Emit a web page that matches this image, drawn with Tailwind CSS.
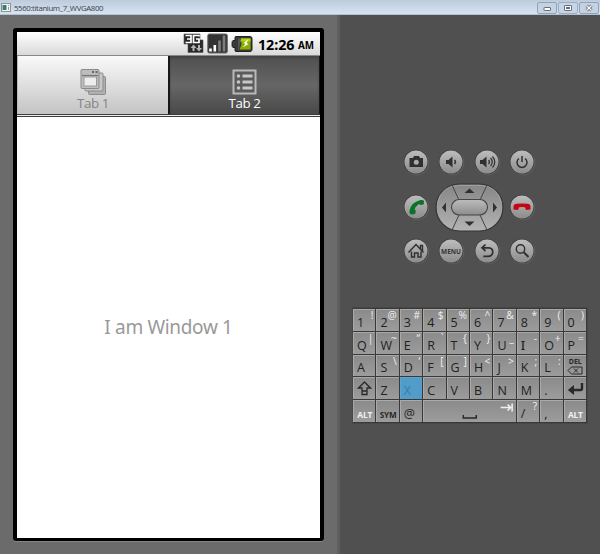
<!DOCTYPE html>
<html lang="en">
<head>
<meta charset="utf-8">
<title>5560:titanium_7_WVGA800</title>
<script src="https://cdn.jsdelivr.net/npm/@tailwindcss/browser@4"></script>
</head>
<body class="w-[600px] h-[554px] overflow-hidden flex flex-col bg-[#505050] font-['Noto_Sans','Open_Sans',sans-serif]">
<svg width="0" height="0" class="absolute"><defs>
<linearGradient id="metal" x1="0" y1="0" x2="0" y2="1"><stop offset="0" stop-color="#858585"/><stop offset="1" stop-color="#b4b4b4"/></linearGradient>
<linearGradient id="shine" x1="0" y1="0" x2="0" y2="1"><stop offset="0" stop-color="#bdbdbd"/><stop offset="1" stop-color="#8c8c8c"/></linearGradient>
</defs></svg>

<header class="h-[15px] shrink-0 flex items-center bg-linear-to-b from-[#bdcbdc] to-[#d5e3f2] border-b border-[#b4c2d0] pl-[1px]">
  <svg width="10" height="9" viewBox="0 0 10 9"><rect x=".5" y=".5" width="9" height="8" fill="#f5f5f5" stroke="#8b9494"/><rect x="1.5" y="2" width="4" height="5" fill="#3b7d70"/><path d="M7.5 2v1M7.5 4v3" stroke="#999"/></svg>
  <h1 class="ml-[3px] mt-[1px] text-[7.8px] leading-[14px] text-[#3c4248] tracking-[-0.37px] font-['Open_Sans',sans-serif] whitespace-nowrap">5560:titanium_7_WVGA800</h1>
  <div class="ml-auto mr-[1px] mt-[1px] flex gap-[1px]">
    <svg width="20" height="12" viewBox="0 0 20 12"><rect x=".5" y=".5" width="19" height="11" rx="1.5" fill="#c4d2e2" stroke="#91a3bb"/><rect x="7" y="5.5" width="6.500" height="3" rx=".5" fill="#fff" stroke="#666d78"/></svg>
    <svg width="20" height="12" viewBox="0 0 20 12"><rect x=".5" y=".5" width="19" height="11" rx="1.500" fill="#c7d6e6" stroke="#9badc2"/><rect x="6.500" y="3.500" width="7" height="5" rx=".5" fill="#fff" stroke="#666d78"/><rect x="8.500" y="5.500" width="3" height="1" fill="none" stroke="#666d78"/></svg>
    <svg width="20" height="12" viewBox="0 0 20 12"><rect x=".5" y=".5" width="19" height="11" rx="1.5" fill="#c4d2e2" stroke="#91a3bb"/><path d="M7.500 3.500L12.500 8.500M12.500 3.500L7.500 8.500" stroke="#626975" stroke-width="3"/><path d="M7.500 3.500L12.500 8.500M12.500 3.500L7.500 8.500" stroke="#fff" stroke-width="1.200"/></svg>
  </div>
</header>

<div class="flex flex-1 min-h-0">
  <section class="w-[340px] shrink-0 bg-[#6b6b6b] border-r-3 border-[#5e5e5e] pt-[13px] pl-[13px]">
    <main class="w-[311px] h-[513px] rounded-[3px] bg-white border-4 border-black border-b-3 flex flex-col shadow-[0_1px_0_#858585]">
      <div class="h-[24px] shrink-0 bg-linear-to-b from-white via-[#ececec] to-[#d9d9d9] border-b border-[#888] flex items-center pr-[6px] justify-end">
        <svg width="21" height="21" viewBox="0 0 21 21"><path d="M1 1h16v6h3v12.500H5V11H1z" fill="#292929" stroke="#555" stroke-width=".6"/><path d="M2.500 2.500h5.500v7h-5.500M4 6h4M16 3.500V2.500h-5.500v7H16V6h-3" fill="none" stroke="#fff" stroke-width="1.700"/><path d="M9.500 18v-3H7.500l3-3.500 3 3.500h-2v3zM15 12h2v3h2l-3 3.500-3-3.500h2z" fill="#b5b5b5"/></svg>
        <svg class="ml-[3px]" width="21" height="21" viewBox="0 0 21 21"><rect x=".8" y="1" width="19.500" height="19" rx="1.500" fill="#333" stroke="#666"/><path d="M3.500 18.500v-3M7.800 18.500v-6.500" stroke="#fff" stroke-width="2.600"/><path d="M12.500 18.500V7.500M17 18.500V2.500" stroke="#7d7d7d" stroke-width="2.600"/></svg>
        <svg class="ml-[3px]" width="22" height="18" viewBox="0 0 22 18"><path d="M4 2.500q0-1 1-1h14q2 0 2 2v11q0 2-2 2H5q-1 0-1-1v-3H2q-1 0-1-3.500t1-3.500h2z" fill="#393939" stroke="#222"/><path d="M10 3.500h9.500v11h-11l2-5z" fill="#89ad00"/><path d="M10 3.500h9.500v3h-11z" fill="#b0d411"/><path d="M7 3.500h3l-2 11H7z" fill="#555"/><path d="M17.500 4l-5 4 2 1-3 3.500 6-3.500-2-1z" fill="#fff"/></svg>
        <span class="ml-[5px] text-[14.3px] leading-[24px] font-bold text-black w-[37px] tracking-[-0.05px] whitespace-nowrap pt-[2px]">12:26</span><span class="ml-[3px] pt-[4px] text-[9.8px] leading-[20px] font-bold text-black">AM</span>
      </div>
      <nav class="h-[61px] shrink-0 flex flex-col">
        <div class="h-[58px] flex">
          <div class="w-[151px] border-l border-[#bbb] bg-linear-to-b from-[#fafafa] to-[#c4c4c4] flex flex-col items-center pt-[12px] text-[#858585]">
            <svg width="28" height="28" viewBox="0 0 28 28"><g fill="#b0b0b0" stroke="#8b8b8b"><rect x="9.500" y="8.500" width="17" height="18" rx="1"/><rect x="6" y="5" width="18" height="18" rx="1" fill="#c8c8c8"/><rect x="2" y="1.500" width="18" height="19" rx="1" fill="#bebebe"/></g><path d="M3 7.500h16" stroke="#777" stroke-width="1.200"/><rect x="5" y="9" width="12.500" height="9" fill="#ededed" stroke="#999"/><path d="M13 4h2M16.500 4h2" stroke="#666" stroke-width="1.800"/></svg>
            <span class="text-[13.3px] leading-[14px] font-['Open_Sans',sans-serif] tracking-[-0.4px]">Tab 1</span>
          </div>
          <div class="flex-1 border-l-2 border-r border-[#181818] bg-linear-to-b from-[#505050] via-[#666] to-[#494949] flex flex-col items-center pt-[13px] text-white shadow-[inset_0_2px_2px_#444]">
            <svg width="25" height="27" viewBox="0 0 25 27"><rect x="1.500" y="1.500" width="22" height="23" fill="#5b5b5b" stroke="#b9b9b9" stroke-width="2"/><path d="M10.500 7h10M10.500 13h10M10.500 19h10" stroke="#c7c7c7" stroke-width="3"/><g fill="#c7c7c7"><circle cx="6.500" cy="7" r="1.800"/><circle cx="6.500" cy="13" r="1.800"/><circle cx="6.500" cy="19" r="1.800"/></g></svg>
            <span class="text-[13.3px] leading-[14px] font-['Open_Sans',sans-serif] tracking-[-0.4px]">Tab 2</span>
          </div>
        </div>
        <div class="h-[3px] border-y border-[#3d3d3d] bg-[#eee]"></div>
      </nav>
      <div class="flex-1 flex items-center justify-center text-[19px] tracking-[-0.33px] text-[#999]"><span>I am Window 1</span></div>
    </main>
  </section>

  <aside class="flex-1 pl-[13px] pt-[134px]">
    <div class="ml-[51px] w-[131px] h-[116px] flex flex-col justify-between">
      <div id="r0" class="flex justify-between"></div>
      <div class="h-[48px] mt-[-4px] mb-[-4px] flex justify-between items-center">
        <div id="call"></div>
        <svg width="69" height="49" viewBox="0 0 69 49"><rect x="1" y="1" width="67" height="47" rx="23.500" fill="url(#metal)" stroke="#343434" stroke-width="1.200"/><path d="M2.500 20Q6 2.500 24 2.500h21Q63 2.500 66.500 20" fill="none" stroke="#aaa" stroke-width=".7"/><path d="M17 2l7 15M52 2l-7 15M24 32L17 47M45 32l7 15" stroke="#444"/><rect x="16.500" y="16.500" width="36" height="15.500" rx="7.700" fill="url(#shine)" stroke="#444" stroke-width="1.100"/><path d="M34.500 5.500l5 4.500h-10zM34.500 43l5-4.500h-10zM7 24.500l4-5v10zM62 24.500l-4-5v10z" fill="#303030"/></svg>
        <div id="end"></div>
      </div>
      <div id="r2" class="flex justify-between"></div>
    </div>
    <div id="keys" class="mt-[43px] w-[234px] h-[115px] grid grid-cols-10 grid-rows-5 gap-[1px] p-[1px] pl-0 bg-[#393939] shadow-[0_0_0_1px_#474747] font-['Open_Sans','Noto_Sans',sans-serif]"></div>
  </aside>
</div>

<script>
const dark = '#303030';
const icons = {
  camera: `<path d="M6.500 9h3.500l1-2h5l1 2h3v9H6.500z" fill="${dark}"/><circle cx="13.300" cy="13.200" r="2.500" fill="#aaa"/>`,
  low: `<path d="M8 11h2.500l4-3.500v11l-4-3.500H8z" fill="${dark}"/><path d="M16.500 11q2 2 0 4" fill="none" stroke="${dark}" stroke-width="1.400"/>`,
  high: `<path d="M6 11h2.500l4-3.500v11l-4-3.500H6z" fill="${dark}"/><path d="M14.500 11q2 2 0 4M16.500 9q3.500 4 0 8M18.500 7.500q4.500 5.500 0 11" fill="none" stroke="${dark}" stroke-width="1.200"/>`,
  power: `<path d="M10 9.500a5 5 0 1 0 6 0M13 7v6" fill="none" stroke="${dark}" stroke-width="1.500"/>`,
  call: `<path d="M17.500 6q2.500-.5 3.500 1l-.3 3.500-3.700.5-.8-1.200q-3.700 2.400-4.700 6.200l1.500.5-1 3.500-3.500.5q-2.500-1-2-3.500 1-8.500 11-11z" fill="#09732a"/>`,
  end: `<path d="M4.500 12q0-1.800 3-2.200 5.500-.8 11 0 3 .4 3 2.200v3.500l-4.500.5-1-2.800q-3-.6-6 0l-1 2.800-4.500-.5z" fill="#c50714"/>`,
  home: `<path d="M5.500 14.500L13 6.500l7.500 8M17.500 11V7.500h2V13M8.500 13.500v5.500h3v-4h3.500v4h3v-5.500" fill="none" stroke="${dark}" stroke-width="1.400"/>`,
  menu: `<text x="13" y="16" text-anchor="middle" font-family="Open Sans, sans-serif" font-size="7.300" font-weight="700" textLength="20" lengthAdjust="spacingAndGlyphs" fill="#363636">MENU</text>`,
  back: `<path d="M11.500 6.500L8 9.800l3.500 3.200M8.300 9.800h6.500q4 .5 4 4.300-.4 4-4.500 4.300h-5" fill="none" stroke="${dark}" stroke-width="1.700"/>`,
  search: `<circle cx="11.500" cy="11" r="4.200" fill="none" stroke="${dark}" stroke-width="1.400"/><path d="M14.500 14l5 5" stroke="${dark}" stroke-width="2"/>`
};
const button = n => `<svg class="-mx-[1px]" width="27" height="27" viewBox="0 0 27 27"><circle cx="13.500" cy="13.500" r="12.800" fill="#606060"/><circle cx="13" cy="13" r="12.300" fill="#393939"/><circle cx="13" cy="13" r="11.500" fill="url(#shine)"/>${icons[n]}</svg>`;
document.getElementById('r0').innerHTML = ['camera','low','high','power'].map(button).join('');
document.getElementById('r2').innerHTML = ['home','menu','back','search'].map(button).join('');
document.getElementById('call').innerHTML = button('call');
document.getElementById('end').innerHTML = button('end');

const rows = [
  ['1!','2@','3#','4$','5%','6^','7&','8*','9(','0)'],
  ['Q|','W~','E“','R`','T{','Y}','U_','I-','O+','P='],
  ['A','S\\','D‘','F[','G]','H<','J>','K;','L:','DEL'],
  ['SHIFT','Z','X','C','V','B','N','M','.','ENTER'],
  ['ALT','SYM','@','SPACE','/?',',','ALT']
];
const face = 'min-w-0 min-h-0 overflow-hidden border-t border-l border-[#a9a9a9] bg-linear-to-b from-[#8b8b8b] to-[#9c9c9c] flex';
const special = {
  ALT: `<div class="${face} items-end justify-center"><b class="text-[8.4px] leading-[15px] text-[#f0f0f0] tracking-[-0.2px]">ALT</b></div>`,
  SYM: `<div class="${face} items-end justify-center"><b class="text-[8.2px] leading-[15px] text-[#292929] tracking-[-0.3px]">SYM</b></div>`,
  DEL: `<div class="${face} flex-col items-center pt-[2px]"><b class="text-[7px] leading-[8px] text-[#292929]">DEL</b><svg width="16" height="9" viewBox="0 0 16 9"><path d="M1 4.500L4.500 1H15v7H4.500zM7 2.500l4 4M11 2.500l-4 4" fill="none" stroke="#292929"/></svg></div>`,
  SHIFT: `<div class="${face} items-center justify-center"><svg width="15" height="15" viewBox="0 0 15 15"><path d="M7.500 1L13.500 7H10v3H5V7H1.500zM5 10v3.500h5V10" fill="none" stroke="#292929" stroke-width="1.300"/></svg></div>`,
  ENTER: `<div class="${face} items-center justify-center"><svg width="17" height="14" viewBox="0 0 17 14"><path d="M15 1v5.500q0 1.500-1.500 1.500H4" fill="none" stroke="#292929" stroke-width="2.400"/><path d="M.8 8L7 3v10z" fill="#292929"/></svg></div>`,
  SPACE: `<div class="${face} col-span-4 justify-end"><svg width="92" height="21" viewBox="0 0 92 21"><path d="M39.500 14v3h13v-3" fill="none" stroke="#292929" stroke-width="1.500"/><path d="M77 6.500h9M84 3.500l3 3-3 3M88.500 2.500v8" fill="none" stroke="#f0f0f0" stroke-width="1.600"/></svg></div>`
};
const esc = s => s.replace('&', '&amp;').replace('<', '&lt;');
document.getElementById('keys').innerHTML = rows.flat().map(k => {
  if (special[k]) return special[k];
  if (k === 'X') return `<div class="bg-[#519cc8] border-t border-l border-[#5ba5d0] flex items-end pl-[3px]"><span class="text-[12.5px] leading-[16px] text-[#3a7da6]">X</span></div>`;
  const serifed = k[0] === 'I' ? "font-['Noto_Sans',sans-serif]" : '';
  return `<div class="${face} justify-between pl-[3px] pr-[2px]"><span class="self-end ${serifed} text-[12.5px] leading-[16px] font-medium text-[#222]">${esc(k[0])}</span><span class="text-[10.3px] leading-[11px] font-medium text-[#f0f0f0] -ml-[4px]">${esc(k[1] || '')}</span></div>`;
}).join('');
</script>
</body>
</html>
